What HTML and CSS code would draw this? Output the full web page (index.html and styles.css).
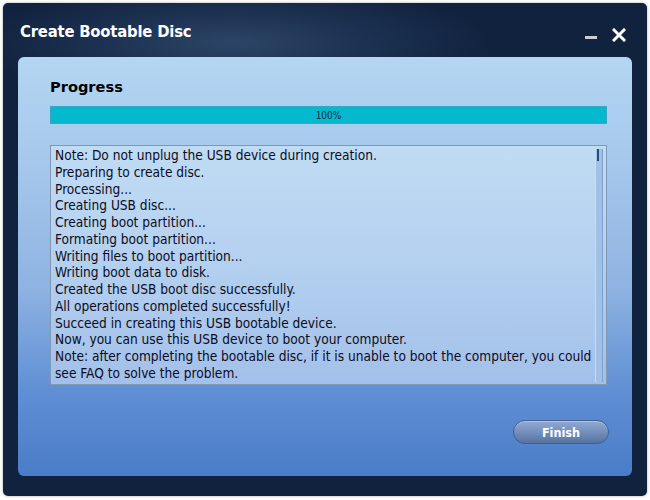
FILE: index.html
```html
<!DOCTYPE html>
<html>
<head>
<meta charset="utf-8">
<link rel="stylesheet" href="styles.css">
</head>
<body>
<div class="window">
  <div class="titlebar">
    <div class="title">Create Bootable Disc</div>
    <div class="controls">
      <span class="min"></span>
      <svg class="close" width="14" height="14" viewBox="0 0 14 14"><path d="M2 2 L12 12 M12 2 L2 12" stroke="#fff" stroke-width="3" stroke-linecap="square"/></svg>
    </div>
  </div>
  <div class="panel">
    <div class="heading">Progress</div>
    <div class="bar"><span>100%</span></div>
    <div class="log">
      <div class="lines">
        <div>Note: Do not unplug the USB device during creation.</div>
        <div>Preparing to create disc.</div>
        <div>Processing...</div>
        <div>Creating USB disc...</div>
        <div>Creating boot partition...</div>
        <div>Formating boot partition...</div>
        <div>Writing files to boot partition...</div>
        <div>Writing boot data to disk.</div>
        <div>Created the USB boot disc successfully.</div>
        <div>All operations completed successfully!</div>
        <div>Succeed in creating this USB bootable device.</div>
        <div>Now, you can use this USB device to boot your computer.</div>
        <div>Note: after completing the bootable disc, if it is unable to boot the computer, you could see FAQ to solve the problem.</div>
      </div>
      <div class="scroll"><div class="thumb"></div></div>
    </div>
    <div class="footer"><button class="finish">Finish</button></div>
  </div>
</div>
</body>
</html>
```
FILE: styles.css
```css
html, body { margin: 0; padding: 0; background: #ffffff; }
body { width: 650px; height: 500px; padding: 3px 3px 0 3px; box-sizing: border-box; font-family: "DejaVu Sans", sans-serif; }
.window {
  width: 644px; height: 493px; box-sizing: border-box;
  border-radius: 5px;
  background: radial-gradient(ellipse 260px 60px at 230px 40px, #2c4566 0%, #1a2e4e 60%, #11223f 100%), #11223f;
  background-color: #11223f;
  box-shadow: 0 0 3px rgba(0,0,0,0.35);
  padding: 0 15px 20px 15px;
  display: flex; flex-direction: column;
}
.titlebar { height: 54px; display: flex; align-items: flex-start; justify-content: space-between; }
.title { color: #fff; font-family: "DejaVu Sans Condensed", "DejaVu Sans", sans-serif; font-weight: bold; font-size: 16.5px; margin-top: 19px; margin-left: 2px; letter-spacing: -0.2px; }
.controls { display: flex; align-items: center; gap: 15px; margin-top: 25px; margin-right: 6px; }
.min { display: block; width: 12px; height: 3px; background: #c8ccd4; margin-top: 4px; }
.close { display: block; }
.panel {
  flex: 1;
  border-radius: 6px;
  background: linear-gradient(to bottom, #b4d6f2 0%, #a6c8ec 25%, #8fb3e2 55%, #5f8fd4 80%, #4a7cc8 100%);
  padding: 19px 25px 0 32px;
  display: flex; flex-direction: column;
}
.heading { font-family: "DejaVu Sans", sans-serif; font-weight: bold; font-size: 14.6px; color: #000; height: 30px; line-height: 21px; }
.bar {
  height: 18px; box-sizing: border-box; background: #04b8cd; border: 1px solid #3aa6c6;
  display: flex; align-items: center; justify-content: center;
  font-family: "DejaVu Sans Condensed", "DejaVu Sans", sans-serif; font-size: 10px; color: #1a2a3a;
}
.log {
  margin-top: 21px; height: 240px; box-sizing: border-box;
  border: 1px solid #8298b2;
  background: linear-gradient(to bottom, #c0dcf4 0%, #b4d0ef 50%, #a3c0ea 100%);
  display: flex;
}
.lines { flex: 1; padding: 1px 0 0 4px; font-family: "DejaVu Sans Condensed", "DejaVu Sans", sans-serif; font-size: 13.6px; line-height: 16.75px; color: #0c0c1c; }
.scroll { width: 6px; margin: 3px 3px 2px 0; background: #a0c0e6; border-left: 1px solid #c6dcf4; border-right: 1px solid #7ea2d0; position: relative; }
.thumb { position: absolute; left: 1px; top: 0; width: 2px; height: 12px; background: #304a6c; }
.footer { flex: 1; display: flex; justify-content: flex-end; align-items: flex-start; padding-top: 35px; }
.finish {
  width: 96px; height: 24px; border-radius: 12px; margin-right: -2px;
  border: 1px solid #3f5f95;
  background: linear-gradient(to bottom, #93aad0 0%, #7590bd 50%, #56729f 100%);
  color: #fff; font-family: "DejaVu Sans Condensed", "DejaVu Sans", sans-serif; font-weight: bold; font-size: 12.5px;
  box-shadow: inset 0 1px 0 rgba(255,255,255,0.3);
  padding: 0;
}
```
